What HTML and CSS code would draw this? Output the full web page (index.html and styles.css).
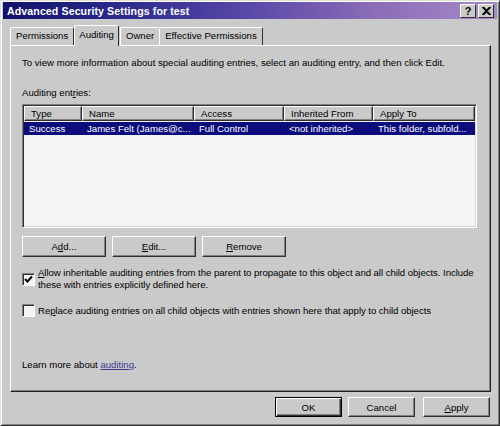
FILE: index.html
```html
<!DOCTYPE html>
<html>
<head>
<meta charset="utf-8">
<link rel="stylesheet" href="styles.css">
</head>
<body>
<div class="window">
  <div class="titlebar">
    <span class="title">Advanced Security Settings for test</span>
    <div class="tbtns">
      <span class="tbtn">?</span>
      <span class="tbtn close">
        <svg width="9" height="8" viewBox="0 0 9 8"><path d="M1 0 L4.5 3.5 L8 0 M1 8 L4.5 4.5 L8 8 M0.5 0 L8.5 8 M8.5 0 L0.5 8" stroke="#000" stroke-width="1.6" fill="none"/></svg>
      </span>
    </div>
  </div>
  <div class="tabs">
    <span class="tab">Permissions</span>
    <span class="tab active">Auditing</span>
    <span class="tab">Owner</span>
    <span class="tab">Effective Permissions</span>
  </div>
  <div class="panel">
    <p class="intro">To view more information about special auditing entries, select an auditing entry, and then click Edit.</p>
    <p class="label">Auditing ent<u>r</u>ies:</p>
    <div class="list">
      <div class="row head">
        <span class="c1 hc">Type</span>
        <span class="c2 hc">Name</span>
        <span class="c3 hc">Access</span>
        <span class="c4 hc">Inherited From</span>
        <span class="c5 hc">Apply To</span>
      </div>
      <div class="row sel">
        <span class="c1">Success</span>
        <span class="c2">James Felt (James@c...</span>
        <span class="c3">Full Control</span>
        <span class="c4">&lt;not inherited&gt;</span>
        <span class="c5">This folder, subfold...</span>
      </div>
    </div>
    <div class="btnrow">
      <span class="btn">A<u>d</u>d...</span>
      <span class="btn"><u>E</u>dit...</span>
      <span class="btn"><u>R</u>emove</span>
    </div>
    <div class="check first">
      <span class="box"><svg width="9" height="9" viewBox="0 0 9 9"><path d="M1 4 L3.5 6.5 L8 1.5" stroke="#000" stroke-width="2" fill="none"/></svg></span>
      <span class="ctext"><u>A</u>llow inheritable auditing entries from the parent to propagate to this object and all child objects. Include these with entries explicitly defined here.</span>
    </div>
    <div class="check second">
      <span class="box"></span>
      <span class="ctext">Re<u>p</u>lace auditing entries on all child objects with entries shown here that apply to child objects</span>
    </div>
    <p class="learn">Learn more about <a class="link">auditing</a>.</p>
  </div>
  <div class="footer">
    <span class="btn small def">OK</span>
    <span class="btn small">Cancel</span>
    <span class="btn small"><u>A</u>pply</span>
  </div>
</div>
</body>
</html>
```
FILE: styles.css
```css
* { box-sizing: border-box; }
html, body { margin: 0; padding: 0; }
body {
  width: 500px; height: 426px; overflow: hidden;
  font-family: "Liberation Sans", Arial, sans-serif;
  font-size: 9.6px; color: #000;
  background: #cacaca;
}
.window {
  width: 500px; height: 426px;
  background: #cacaca;
  border: 1px solid; border-color: #e0e0e0 #303030 #303030 #e0e0e0;
  box-shadow: inset 1px 1px 0 #fff, inset -1px -1px 0 #808080;
  padding: 1px 2px 2px 2px;
  display: flex; flex-direction: column;
}
.titlebar {
  height: 17px; flex: none;
  background: linear-gradient(90deg, #12126c 0%, #2c2c8e 25%, #5a48a8 50%, #8a6cb8 75%, #a68ac6 100%);
  display: flex; align-items: center; justify-content: space-between;
  padding: 0 3px 0 4px;
}
.title { color: #fff; font-weight: bold; font-size: 10.6px; letter-spacing: 0.1px; }
.tbtns { display: flex; gap: 2px; }
.tbtn {
  width: 16px; height: 14px; background: #cacaca;
  border: 1px solid; border-color: #fff #303030 #303030 #fff;
  font-weight: bold; font-size: 11px; line-height: 12px; text-align: center;
  display: flex; align-items: center; justify-content: center;
}
.tabs {
  display: flex; align-items: flex-end; flex: none;
  margin: 5px 0 0 7px; height: 21px;
  position: relative; z-index: 1;
}
.tab {
  height: 18px; padding: 0 5px; line-height: 16px;
  border: 1px solid; border-bottom: none;
  border-color: #fff #303030 transparent #fff;
  border-radius: 2px 2px 0 0;
  margin-right: -1px;
}
.tab.active {
  height: 21px; padding: 0 4px; line-height: 17px;
  background: #cacaca; margin: 0 1px 0 1px;
  position: relative; top: 1px;
}
.panel {
  margin: 0 6px 0 7px; height: 347px; flex: none;
  border: 1px solid; border-color: #fff #202020 #202020 #fff;
  box-shadow: inset -1px -1px 0 #808080;
  padding: 0 11px;
  display: flex; flex-direction: column;
}
.intro { margin: 10px 0 0; line-height: 13px; white-space: nowrap; }
.label { margin: 17px 0 0; line-height: 13px; }
.list {
  margin-top: 5px; width: 455px; height: 124px; flex: none;
  background: #f4f4f4;
  border: 1px solid; border-color: #808080 #fff #fff #808080;
  box-shadow: inset 1px 1px 0 #303030, inset -1px -1px 0 #d8d8d8;
  padding: 1px;
}
.row { display: flex; height: 13px; line-height: 13px; }
.row span { padding-left: 6px; white-space: nowrap; overflow: hidden; }
.head { height: 15px; margin-bottom: 1px; }
.hc {
  background: #cacaca; line-height: 13px;
  border: 1px solid; border-color: #fff #303030 #303030 #fff;
  box-shadow: inset -1px -1px 0 #808080;
}
.c1 { width: 58px; flex: none; }
.c2 { width: 112px; flex: none; }
.c3 { width: 90px; flex: none; }
.c4 { width: 89px; flex: none; }
.c5 { width: 102px; flex: none; }
.sel { background: #0c0c7c; color: #fff; width: 451px; }
.sel span { padding-left: 5px; }
.btnrow { display: flex; gap: 6px; margin-top: 8px; flex: none; }
.btn {
  width: 84px; height: 21px; flex: none;
  background: #cacaca;
  border: 1px solid; border-color: #fff #303030 #303030 #fff;
  box-shadow: inset -1px -1px 0 #808080;
  display: flex; align-items: center; justify-content: center;
}
.check { display: flex; gap: 3px; align-items: center; flex: none; }
.check.first { margin-top: 10px; }
.check.second { margin-top: 13px; }
.box {
  flex: none; width: 13px; height: 13px;
  background: #f4f4f4;
  border: 1px solid; border-color: #808080 #fff #fff #808080;
  box-shadow: inset 1px 1px 0 #303030;
  display: flex; align-items: center; justify-content: center;
}
.ctext { line-height: 12px; width: 440px; letter-spacing: -0.05px; }
.second .ctext { line-height: 13px; }
.learn { margin: auto 0 20px; line-height: 13px; }
.link { color: #3a3a8c; text-decoration: underline; }
.footer {
  display: flex; justify-content: flex-end; gap: 6px;
  padding: 0 7px 0 0; margin-top: 5px;
}
.btn.small { width: 67px; height: 20px; }
.btn.small:last-child { margin-left: 2px; }
.btn.def { border-color: #000; box-shadow: inset 1px 1px 0 #fff, inset -1px -1px 0 #303030, inset -2px -2px 0 #808080; }
```
